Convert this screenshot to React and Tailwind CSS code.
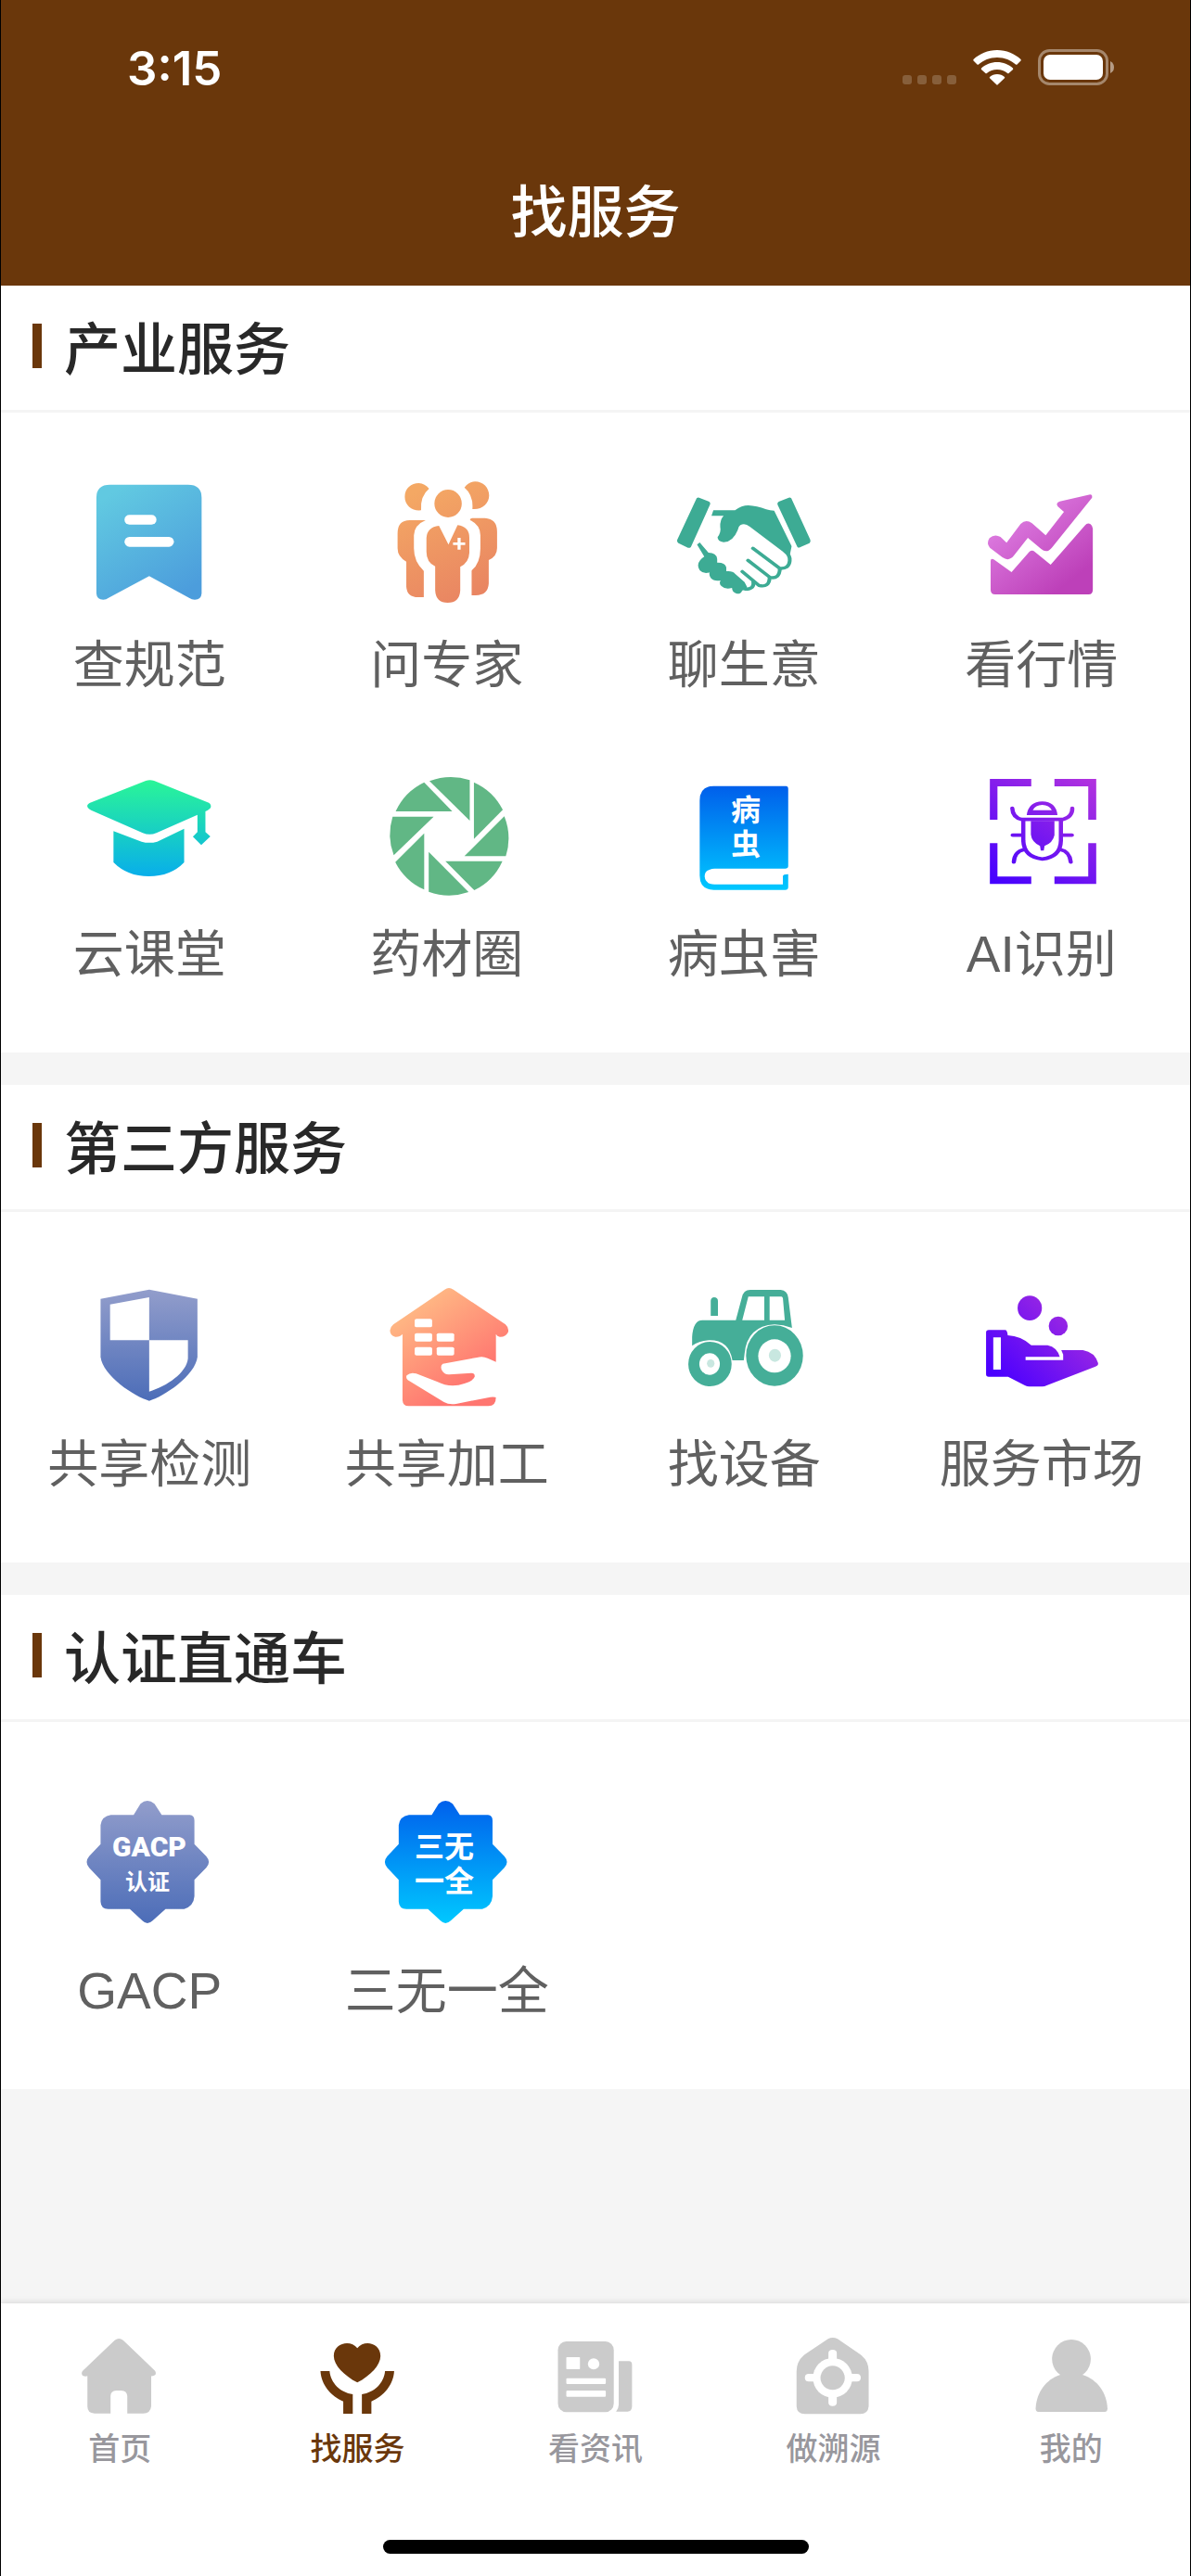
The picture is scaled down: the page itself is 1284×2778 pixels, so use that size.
const CJK = "font-['Noto_Sans_CJK_SC',sans-serif]";
const LATIN_CJK = "font-['Liberation_Sans','Noto_Sans_CJK_SC',sans-serif]";

/* Artwork is authored on a wide grid; Grid maps it into the icon's own box. */
function Grid({ x, y, children }) {
  return <g transform={`scale(0.4095 0.3333) translate(${-x} ${-y})`}>{children}</g>;
}

function Gradient({ id, from, to, x1, y1, x2, y2 }) {
  return (
    <defs>
      <linearGradient id={id} gradientUnits="userSpaceOnUse" x1={x1} y1={y1} x2={x2} y2={y2}>
        <stop offset="0" stopColor={from} />
        <stop offset="1" stopColor={to} />
      </linearGradient>
    </defs>
  );
}

function ServiceIcon({ children }) {
  return (
    <svg viewBox="0 0 160 160" className="size-40" aria-hidden="true">
      {children}
    </svg>
  );
}

function BookmarkIcon() {
  return (
    <ServiceIcon>
      <Grid x={198} y={54}>
        <Gradient id="bookmark" from="#61c9e1" to="#4c9ddc" x1="290" y1="130" x2="520" y2="420" />
        <path fill="url(#bookmark)" d="M254 140Q254 98 290 98H495Q531 98 531 140V450Q530 470 513 470Q505 470 498 464L393 394L286 464Q280 470 272 470Q255 470 254 450Z" />
        <rect x="328" y="196" width="84" height="31" rx="13" ry="15" fill="#fff" />
        <rect x="328" y="267" width="130" height="32" rx="13" ry="16" fill="#fff" />
      </Grid>
    </ServiceIcon>
  );
}

function ExpertsIcon() {
  return (
    <ServiceIcon>
      <Grid x={981} y={54}>
        <Gradient id="experts" from="#f4a864" to="#e98562" x1="1080" y1="130" x2="1260" y2="450" />
        <g fill="url(#experts)">
          <path d="M1129 111Q1105 135 1108 181C1085 184 1065 165 1065 137C1065 110 1082 93 1102 93Q1118 94 1129 111Z" />
          <path d="M1222 107Q1234 88 1250 88C1271 88 1287 108 1287 133C1287 160 1268 180 1243 177Q1246 132 1222 107Z" />
          <ellipse cx="1179" cy="159" rx="36" ry="45" />
          <path d="M1120 213H1078Q1046 213 1046 256V304Q1046 332 1069 347V428Q1071 462 1100 462H1115V377Q1089 348 1089 304V262Q1090 228 1120 213Z" />
          <path d="M1237 213Q1236 206 1243 206H1276Q1308 208 1308 250V303Q1308 330 1286 342V418Q1284 456 1252 456H1241V376Q1264 352 1264 305V262Q1264 228 1237 213Z" />
          <path d="M1155 231L1180 292L1204 229Q1235 234 1235 270V318Q1234 350 1211 364V440Q1209 480 1178 480Q1147 480 1145 440V362Q1122 350 1122 315V270Q1124 235 1155 231Z" />
        </g>
        <path d="M1208 270V308M1192 289H1224" stroke="#fff" strokeWidth="8" />
      </Grid>
    </ServiceIcon>
  );
}

function HandshakeIcon() {
  return (
    <ServiceIcon>
      <Grid x={196} y={54}>
        <g fill="#3dab94">
          <path d="M267 142Q271 138 275 141L300 153Q304 157 302 163L252 299Q249 304 244 302L219 287Q214 283 216 276Z" />
          <path d="M516 142Q512 138 508 141L483 153Q478 157 480 163L532 299Q535 304 540 300L564 287Q568 283 566 276Z" />
          <path d="M311 181H368Q385 165 403 165Q425 166 450 178Q460 182 471 182L517 297L512 328L500 320L407 234Q394 221 382 229Q376 234 375 245Q362 284 338 284Q322 282 322 268Q332 252 329 235Q328 212 338 199H306Z" />
          <path d="M268 292L275 285L298 318Q319 318 321 338V350Q341 349 345 365V378Q362 376 368 386L393 413L400 430Q394 441 387 440Q384 452 373 451Q360 446 360 432Q342 438 332 426Q325 418 330 408Q312 412 304 400Q299 391 301 382Q285 388 275 375Q266 358 276 343Q279 337 287 331Z" />
        </g>
        <g fill="none" stroke="#3dab94" strokeWidth="10" strokeLinecap="round" strokeLinejoin="round">
          <path d="M415 304L486 369Q510 371 512 345Q514 328 500 314" />
          <path d="M402 343L460 398Q485 404 486 370" />
          <path d="M387 379L431 424Q458 432 459 399" />
          <path d="M416 412Q420 436 395 436" />
        </g>
      </Grid>
    </ServiceIcon>
  );
}

function TrendIcon() {
  return (
    <ServiceIcon>
      <Grid x={979} y={54}>
        <Gradient id="trend" from="#dc7adf" to="#bd40b9" x1="1090" y1="200" x2="1270" y2="390" />
        <g fill="url(#trend)">
          <path d="M1302 130Q1308 130 1307 140L1201 302Q1188 322 1173 306L1138 270L1101 328Q1088 348 1071 333L1038 302Q1028 288 1037 271Q1050 256 1066 267L1082 286L1119 225Q1133 208 1149 223L1185 262L1233 186L1217 169Q1210 157 1222 152Z" />
          <path d="M1040 345Q1040 334 1050 341L1095 381L1142 315Q1149 307 1156 315L1198 357L1288 230Q1295 220 1303 226Q1309 232 1309 240V438Q1309 453 1298 453H1052Q1040 453 1040 438Z" />
        </g>
      </Grid>
    </ServiceIcon>
  );
}

function CapIcon() {
  return (
    <ServiceIcon>
      <Grid x={198} y={30}>
        <Gradient id="cap" from="#2af598" to="#08aeea" x1="392" y1="95" x2="392" y2="405" />
        <g fill="url(#cap)">
          <path d="M384 96Q395 91 406 96L550 167Q557 173 555 182Q553 188 541 195V262L554 276L530 304L508 277L520 262V206L412 265Q394 274 376 265L240 191Q229 184 230 176Q231 170 242 165Z" />
          <path d="M299 259L373 293Q393 300 414 293L485 251V360Q450 405 392 405Q335 405 299 360Z" />
        </g>
      </Grid>
    </ServiceIcon>
  );
}

function ApertureIcon() {
  return (
    <ServiceIcon>
      <Grid x={981} y={30}>
        <g fill="#61b785">
          <path d="M1116 101L1190 195H1041A156 192 0 0 1 1116 101Z" />
          <path d="M1130 97A156 192 0 0 1 1236 94V225Z" />
          <path d="M1247 101A156 192 0 0 1 1323 190L1247 284Z" />
          <path d="M1327 211A156 192 0 0 1 1331 340H1222Z" />
          <path d="M1322 356A156 192 0 0 1 1248 450L1172 356Z" />
          <path d="M1233 456A156 192 0 0 1 1128 455V326Z" />
          <path d="M1116 448A156 192 0 0 1 1040 359L1116 266Z" />
          <path d="M1036 337A156 192 0 0 1 1033 212H1141Z" />
        </g>
      </Grid>
    </ServiceIcon>
  );
}

function BookIcon() {
  return (
    <ServiceIcon>
      <Grid x={196} y={30}>
        <Gradient id="book" from="#005feb" to="#00c8ff" x1="390" y1="113" x2="390" y2="449" />
        <path fill="url(#book)" d="M275 160Q275 113 312 113H502Q508 113 508 122V372Q508 380 500 380H314Q288 382 288 406Q290 431 314 431H494V405Q494 398 508 398V440Q508 449 500 449H312Q275 449 275 403Z" />
      </Grid>
      <text fill="#fff" fontSize="32" fontWeight="700" textAnchor="middle" className={LATIN_CJK}>
        <tspan x="82" y="65">病</tspan>
        <tspan x="82" y="102">虫</tspan>
      </text>
    </ServiceIcon>
  );
}

function ScanBugIcon() {
  return (
    <ServiceIcon>
      <Grid x={979} y={30}>
        <Gradient id="scan" from="#4300ff" to="#b233de" x1="1045" y1="425" x2="1315" y2="95" />
        <g fill="url(#scan)">
          <path d="M1038 90H1147V114H1058V222H1038Z" />
          <path d="M1208 90H1318V222H1297V114H1208Z" />
          <path d="M1038 298H1058V406H1147V430H1038Z" />
          <path d="M1318 298V430H1208V406H1297V298Z" />
          <path fillRule="evenodd" d="M1135 207Q1140 164 1176 163Q1212 164 1216 207ZM1151 191H1201Q1194 175 1176 174Q1158 175 1151 191Z" />
          <path d="M1146 226H1208V272Q1204 296 1182 307L1180 322H1172L1170 307Q1148 294 1146 270Z" />
        </g>
        <g fill="none" stroke="url(#scan)" strokeWidth="11" strokeLinecap="round">
          <path d="M1097 185Q1098 215 1122 221H1230Q1256 213 1255 185" />
          <path d="M1126 222V290Q1128 343 1176 349Q1224 343 1225 290V222" />
          <path d="M1098 272H1124M1228 272H1254" />
          <path d="M1101 359Q1103 325 1128 319M1251 359Q1248 325 1224 319" />
        </g>
      </Grid>
    </ServiceIcon>
  );
}

function ShieldIcon() {
  return (
    <ServiceIcon>
      <Grid x={198} y={30}>
        <Gradient id="shield" from="#929dcb" to="#4c6db8" x1="393" y1="92" x2="393" y2="452" />
        <path fill="url(#shield)" d="M393 92L520 122V310C515 370 430 440 393 452C355 440 270 370 265 310V122Z" />
        <path fill="#fff" d="M290 140L393 117V256H290ZM393 256H495V315C492 360 440 405 393 422Z" />
      </Grid>
    </ServiceIcon>
  );
}

function HouseHandIcon() {
  return (
    <ServiceIcon>
      <Grid x={981} y={30}>
        <Gradient id="house" from="#ffb583" to="#ff7670" x1="1090" y1="160" x2="1270" y2="360" />
        <path fill="url(#house)" d="M1170 92Q1181 82 1193 92L1330 205Q1340 216 1337 230Q1330 246 1315 245Q1308 243 1305 236V440Q1305 469 1285 469H1075Q1060 469 1059 450V236Q1052 246 1040 245Q1026 240 1026 224Q1027 213 1035 205Z" />
        <g fill="#fff">
          <rect x="1091" y="187" width="46" height="27" rx="5" />
          <rect x="1091" y="233" width="46" height="27" rx="5" />
          <rect x="1149" y="233" width="46" height="27" rx="5" />
          <rect x="1091" y="278" width="46" height="27" rx="5" />
          <rect x="1149" y="278" width="46" height="27" rx="5" />
          <path d="M1308 328L1283 314Q1270 306 1255 312L1165 332Q1158 338 1162 352Q1168 368 1182 367L1240 362Q1250 362 1249 374Q1244 388 1222 396Q1185 412 1150 390L1095 364Q1080 358 1070 370Q1067 378 1073 385L1168 456Q1182 466 1200 462L1290 440Q1300 438 1308 442Z" />
        </g>
      </Grid>
    </ServiceIcon>
  );
}

function TractorIcon() {
  return (
    <ServiceIcon>
      <Grid x={196} y={30}>
        <g fill="#45ae98">
          <path d="M304 177V128Q305 117 313 117Q322 117 323 128V177Z" />
          <path fillRule="evenodd" d="M255 274V245Q258 191 282 191H370L386 118Q390 93 408 93H488Q506 95 508 118L518 216Q495 205 472 205Q400 210 393 300L391 321H361Q352 255 300 256Q272 258 255 274ZM403 115L387 191H445V115ZM459 115V191H499L494 120Q493 115 490 115Z" />
          <ellipse cx="302" cy="333" rx="57" ry="72" />
          <ellipse cx="472" cy="306" rx="75" ry="98" />
        </g>
        <ellipse cx="301" cy="333" rx="27" ry="35" fill="#fff" />
        <ellipse cx="472" cy="307" rx="43" ry="54" fill="#fff" />
        <ellipse cx="304" cy="331" rx="10" ry="13" fill="#c8e7e0" />
        <ellipse cx="473" cy="305" rx="16" ry="21" fill="#c8e7e0" />
      </Grid>
    </ServiceIcon>
  );
}

function MarketIcon() {
  return (
    <ServiceIcon>
      <Grid x={979} y={30}>
        <Gradient id="market" from="#4a00ff" to="#9a27e3" x1="1060" y1="380" x2="1270" y2="210" />
        <g fill="url(#market)">
          <ellipse cx="1143" cy="152" rx="32" ry="40" />
          <ellipse cx="1218" cy="210" rx="25" ry="31" />
          <path fillRule="evenodd" d="M1035 223H1078Q1084 223 1085 240Q1120 242 1147 272H1190Q1215 278 1222 310H1132V320H1231V302L1226 288H1283Q1314 294 1323 330Q1324 338 1316 341L1188 402Q1182 406 1176 406H1142Q1136 406 1130 402L1086 374H1035Q1028 374 1028 366V231Q1028 223 1035 223ZM1047 247V351H1067V247Z" />
        </g>
      </Grid>
    </ServiceIcon>
  );
}

const BADGE =
  "M352 142L370 106Q388 86 407 106L426 142H500Q512 143 512 160V236L543 275Q557 294 543 313L512 352V405Q510 437 485 446H436L402 484Q388 500 375 484L342 446H285Q266 446 265 422V352L235 313Q222 294 235 275L265 236V175Q268 146 292 142Z";

function GacpIcon() {
  return (
    <ServiceIcon>
      <Grid x={198} y={30}>
        <Gradient id="gacp" from="#929dcb" to="#4c6db8" x1="388" y1="95" x2="388" y2="492" />
        <path fill="url(#gacp)" d={BADGE} />
      </Grid>
      <g fill="#fff" textAnchor="middle">
        <text x="80" y="82" fontSize="30" fontWeight="900" className="font-['Roboto',sans-serif]">GACP</text>
        <text x="78" y="118" fontSize="24" fontWeight="700" className={CJK}>认证</text>
      </g>
    </ServiceIcon>
  );
}

function PurityIcon() {
  return (
    <ServiceIcon>
      <Grid x={197} y={30}>
        <Gradient id="purity" from="#0060ec" to="#00c8ff" x1="388" y1="95" x2="388" y2="492" />
        <path fill="url(#purity)" d={BADGE} />
      </Grid>
      <text fill="#fff" fontSize="32" fontWeight="700" textAnchor="middle" className={LATIN_CJK}>
        <tspan x="77" y="83">三无</tspan>
        <tspan x="77" y="120">一全</tspan>
      </text>
    </ServiceIcon>
  );
}

function TabIcon({ children }) {
  return (
    <svg viewBox="0 0 90 90" className="size-[90px]" fill="currentColor" aria-hidden="true">
      {children}
    </svg>
  );
}

function HomeIcon() {
  return (
    <TabIcon>
      <Grid x={206} y={171}>
        <path d="M303 191Q314 181 325 191L409 290Q413 298 409 304Q404 308 399 307V405Q397 428 378 428H336V372Q335 354 320 354H307Q292 355 292 372V428H250Q231 427 231 405V307Q225 310 218 305Q214 298 218 291Z" />
      </Grid>
    </TabIcon>
  );
}

function CareIcon() {
  return (
    <TabIcon>
      <Grid x={832} y={171}>
        <path d="M940 328C905 305 878 272 878 242C878 200 922 188 940 217C958 188 1001 200 1001 242C1001 272 975 305 940 328Z" />
        <path d="M843 291H867C870 330 895 360 928 366V429H903V389C870 372 845 335 843 291Z" />
        <path d="M1037 291H1013C1010 330 985 360 952 366V429H977V389C1010 372 1035 335 1037 291Z" />
      </Grid>
    </TabIcon>
  );
}

function NewsIcon() {
  return (
    <TabIcon>
      <Grid x={1458} y={171}>
        <rect x="1469" y="195" width="147" height="229" rx="22" ry="28" />
        <path d="M1629 259H1656Q1664 259 1664 270V405Q1664 422 1652 422H1622Q1629 412 1629 400Z" />
        <g fill="#fff">
          <rect x="1491" y="246" width="36" height="39" rx="2" />
          <ellipse cx="1563" cy="268" rx="15" ry="18" />
          <rect x="1491" y="314" width="104" height="19" rx="3" />
          <rect x="1491" y="354" width="104" height="20" rx="3" />
        </g>
      </Grid>
    </TabIcon>
  );
}

function TraceIcon() {
  return (
    <TabIcon>
      <Grid x={516} y={171}>
        <path d="M613 187Q625 179 638 187L695 235Q720 255 720 292V405Q718 430 698 430H552Q531 430 530 405V292Q530 258 552 237Z" />
        <g fill="#fff">
          <ellipse cx="625" cy="313" rx="52" ry="64" />
          <rect x="614" y="222" width="22" height="182" rx="11" />
          <rect x="552" y="300" width="147" height="25" rx="10" ry="12" />
        </g>
        <ellipse cx="625" cy="313" rx="32" ry="39" />
      </Grid>
    </TabIcon>
  );
}

function PersonIcon() {
  return (
    <TabIcon>
      <Grid x={1142} y={171}>
        <ellipse cx="1252" cy="252" rx="51" ry="63" />
        <path d="M1223 303H1281C1320 318 1345 360 1347 412Q1347 423 1340 423H1165Q1158 423 1158 412C1160 360 1185 318 1223 303Z" />
      </Grid>
    </TabIcon>
  );
}

const SECTIONS = [
  {
    title: "产业服务",
    gap: "gap-[9px]",
    items: [
      { label: "查规范", Icon: BookmarkIcon },
      { label: "问专家", Icon: ExpertsIcon },
      { label: "聊生意", Icon: HandshakeIcon },
      { label: "看行情", Icon: TrendIcon },
      { label: "云课堂", Icon: CapIcon },
      { label: "药材圈", Icon: ApertureIcon },
      { label: "病虫害", Icon: BookIcon },
      { label: "AI识别", Icon: ScanBugIcon },
    ],
  },
  {
    title: "第三方服务",
    gap: "gap-[9px]",
    items: [
      { label: "共享检测", Icon: ShieldIcon },
      { label: "共享加工", Icon: HouseHandIcon },
      { label: "找设备", Icon: TractorIcon },
      { label: "服务市场", Icon: MarketIcon },
    ],
  },
  {
    title: "认证直通车",
    gap: "gap-[27px]",
    items: [
      { label: "GACP", Icon: GacpIcon },
      { label: "三无一全", Icon: PurityIcon },
    ],
  },
];

const TABS = [
  { label: "首页", Icon: HomeIcon },
  { label: "找服务", Icon: CareIcon, active: true },
  { label: "看资讯", Icon: NewsIcon },
  { label: "做溯源", Icon: TraceIcon },
  { label: "我的", Icon: PersonIcon },
];

function StatusBar() {
  return (
    <div className="flex h-[146px] items-center justify-between pr-[81px] pl-[136px]">
      <span className="font-['Inter',sans-serif] text-[51px] leading-none font-semibold">3:15</span>
      <div className="flex items-center gap-[18px]">
        <div className="flex gap-1.5 pt-[26px]">
          <span className="size-2.5 rounded-[3px] bg-white/20" />
          <span className="size-2.5 rounded-[3px] bg-white/20" />
          <span className="size-2.5 rounded-[3px] bg-white/20" />
          <span className="size-2.5 rounded-[3px] bg-white/20" />
        </div>
        <svg viewBox="0 0 52 38" className="h-[38px] w-[52px]" fill="#fff" aria-label="Wi-Fi">
          <path d="M26 0C36 0 45 4 51.5 10Q52 11 51.5 11.5L47.5 15.5Q47 16 46 15.5C41 11 34 8 26 8S11 11 6 15.5Q5 16 4.5 15.5L0.5 11.5Q0 11 0.5 10C7 4 16 0 26 0Z" />
          <path d="M26 13C32.5 13 38.5 15.5 43 19.5Q43.5 20.2 43 21L38.5 25Q38 25.5 37.2 25C34 22.5 30.3 21 26 21S18 22.5 14.8 25Q14 25.5 13.5 25L9 21Q8.5 20.2 9 19.5C13.5 15.5 19.5 13 26 13Z" />
          <path d="M26 26C29 26 32 27 34 29Q34.5 29.6 34 30.3L26.7 37.3Q26 38 25.3 37.3L18 30.3Q17.5 29.6 18 29C20 27 23 26 26 26Z" />
        </svg>
        <svg viewBox="0 0 83 40" className="h-10 w-[83px]" aria-label="Battery">
          <rect x="1.5" y="1.5" width="73" height="36" rx="11" fill="none" stroke="#fff" strokeOpacity="0.4" strokeWidth="3" />
          <rect x="6" y="6" width="64" height="27" rx="7" fill="#fff" />
          <path d="M78 13Q82 15 82 19.5T78 26Z" fill="#fff" fillOpacity="0.5" />
        </svg>
      </div>
    </div>
  );
}

function Section({ title, gap, items }) {
  return (
    <section className="bg-white">
      <div className="flex h-[137px] items-center gap-6 border-b-[3px] border-[#f4f4f4] pb-1 pl-[34px]">
        <span className="h-12 w-2.5 bg-[#6a370b]" />
        <h2 className="text-[61px] leading-[80px] font-medium text-[#282828]">{title}</h2>
      </div>
      <ul className="grid grid-cols-4 gap-y-[63px] pt-[63px] pb-[66px]">
        {items.map(({ label, Icon }) => (
          <li key={label}>
            <a href="#" className={`flex flex-col items-center ${gap}`}>
              <Icon />
              <span className={`text-[55px] leading-[80px] whitespace-nowrap text-[#606060] ${LATIN_CJK}`}>{label}</span>
            </a>
          </li>
        ))}
      </ul>
    </section>
  );
}

export default function App() {
  return (
    <div className="flex min-h-screen flex-col border-x border-black bg-[#f5f5f5] font-['Noto_Sans_CJK_SC',sans-serif]">
      <header className="bg-[#6a370b] text-white">
        <StatusBar />
        <h1 className="flex h-[162px] items-center justify-center pb-1 text-[61px] leading-[80px] font-medium">找服务</h1>
      </header>
      <main className="flex flex-1 flex-col gap-[35px]">
        {SECTIONS.map((section) => (
          <Section key={section.title} {...section} />
        ))}
      </main>
      <nav className="bg-white pt-[33px] pb-6 shadow-[0_-2px_6px_rgba(0,0,0,0.1)]">
        <ul className="grid grid-cols-5">
          {TABS.map(({ label, Icon, active }) => (
            <li key={label}>
              <a
                href="#"
                aria-current={active ? "page" : undefined}
                className={`flex flex-col items-center gap-3 ${active ? "text-[#6a370b]" : "text-[#cbcbcb]"}`}
              >
                <Icon />
                <span className={`text-[34px] leading-10 font-medium ${active ? "" : "text-[#98979d]"}`}>{label}</span>
              </a>
            </li>
          ))}
        </ul>
        <div className="mx-auto mt-20 h-[15px] w-[459px] rounded-full bg-black" />
      </nav>
    </div>
  );
}
